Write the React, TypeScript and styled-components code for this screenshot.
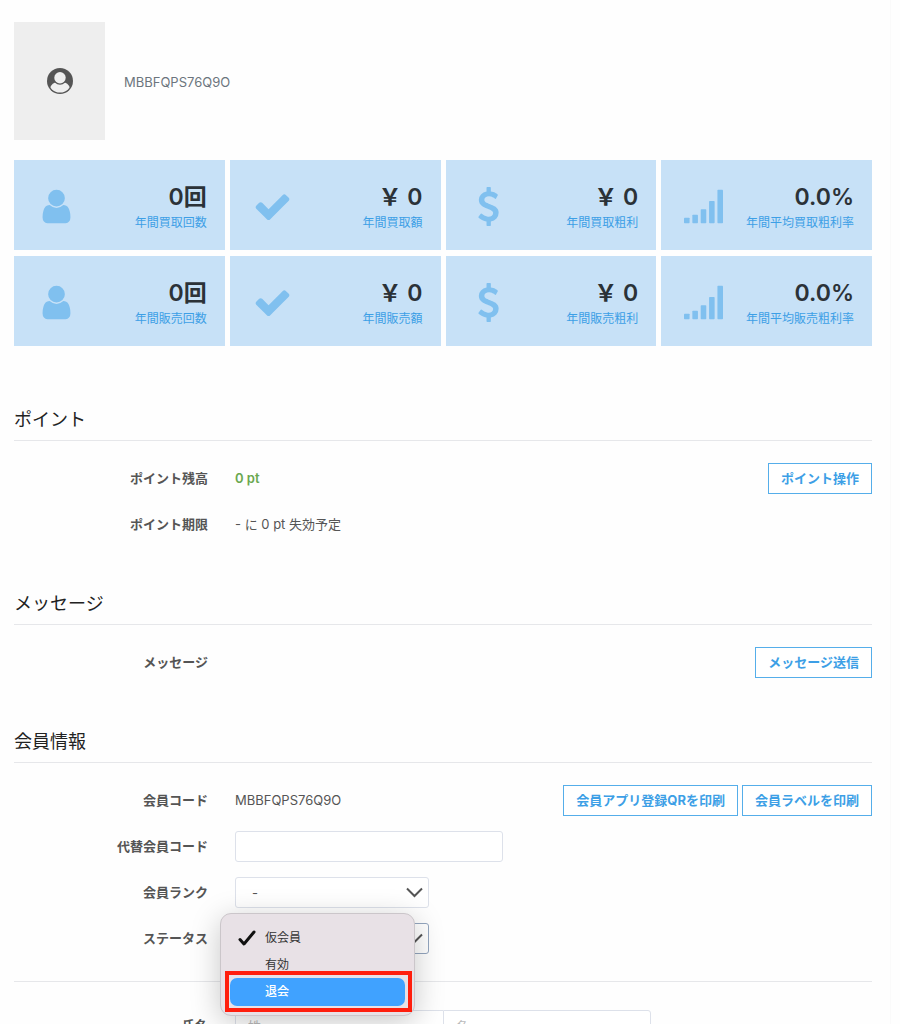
import React from "react";
import styled, { createGlobalStyle, css } from "styled-components";

const GlobalStyle = createGlobalStyle`
  *, *::before, *::after { box-sizing: border-box; }
  body {
    margin: 0;
    background: #fefefe;
    color: #555;
    font-family: Inter, "Noto Sans CJK JP", sans-serif;
    font-size: 13px;
    line-height: 20px;
  }
`;

const Page = styled.main`
  height: 100vh;
  overflow: hidden;
  margin-right: 9px;
  padding: 22px 18px 0 14px;
  border-right: 1px solid #fafafa;
`;

const Profile = styled.header`
  display: flex;
  align-items: center;
  gap: 19px;
  margin-bottom: 20px;
  color: #6c757d;
`;

const MemberCode = styled.span`
  padding-top: 2px;
`;

const Avatar = styled.div`
  display: flex;
  align-items: center;
  justify-content: center;
  width: 91px;
  height: 118px;
  background: #eee;
`;

const StatGrid = styled.section`
  display: grid;
  grid-template-columns: repeat(4, 1fr);
  gap: 6px 5px;
`;

const StatCard = styled.div`
  display: flex;
  align-items: center;
  justify-content: space-between;
  height: 90px;
  padding: 3px 18px 0 23px;
  background: #c7e1f7;
`;

const StatIcon = styled.svg`
  width: 39px;
  height: 39px;
  fill: #80c0ef;
`;

const StatText = styled.div`
  display: flex;
  flex-direction: column;
  gap: 3px;
  padding-top: 2px;
  text-align: right;
`;

const StatValue = styled.strong`
  color: #2b3238;
  font-size: 23px;
  font-weight: 600;
  line-height: 28px;
`;

const StatLabel = styled.span`
  color: #3d9fe6;
  font-size: 12px;
  line-height: 18px;
`;

const Section = styled.section<{ $first?: boolean }>`
  margin-top: ${(p) => (p.$first ? 60 : 50)}px;
`;

const SectionTitle = styled.h2`
  margin: 0 0 22px;
  padding-bottom: 6px;
  border-bottom: 1px solid #e6e7ea;
  color: #222;
  font-size: 18px;
  font-weight: 400;
  line-height: 28px;
`;

const Rows = styled.div`
  display: flex;
  flex-direction: column;
  gap: 15px;
`;

const Row = styled.div`
  display: flex;
  align-items: center;
  gap: 27px;
  min-height: 31px;
`;

const labelStyle = css`
  flex: 0 0 194px;
  padding-bottom: 2px;
  text-align: right;
  font-weight: 700;
`;

const RowTitle = styled.span`
  ${labelStyle}
`;

const RowLabel = styled.label`
  ${labelStyle}
`;

const Value = styled.span`
  flex: 1;
  padding-bottom: 2px;
`;

const Points = styled(Value)`
  color: #6aa84f;
  font-weight: 600;
`;

const Actions = styled.div`
  display: flex;
  gap: 4px;
`;

const OutlineButton = styled.button`
  height: 31px;
  padding: 0 12px 2px;
  border: 1px solid #55aeea;
  background: #fff;
  color: #3d9fe6;
  font: inherit;
  font-weight: 700;
  white-space: nowrap;
`;

const field = css`
  height: 31px;
  border: 1px solid #dde1ea;
  border-radius: 3px;
  background: #fff;
  color: #555;
  font: inherit;
`;

const TextInput = styled.input`
  ${field}
  width: 268px;
  padding: 0 12px;
`;

const NameGroup = styled.div`
  display: flex;
`;

const NameInput = styled.input`
  ${field}
  width: 208px;
  padding: 0 12px;

  &::placeholder { color: #bbb; }
  &:first-child { border-right: 0; border-radius: 3px 0 0 3px; }
  &:last-child { border-radius: 0 3px 3px 0; }
`;

const SelectBox = styled.div`
  position: relative;
  width: 194px;
`;

const Select = styled.select<{ $open?: boolean }>`
  ${field}
  display: block;
  width: 100%;
  padding: 0 30px 0 16px;
  border-color: ${(p) => (p.$open ? "#94a6bf" : "#dde1ea")};
  appearance: none;
`;

const Chevron = styled.svg`
  position: absolute;
  top: 10px;
  right: 6px;
  width: 17px;
  height: 11px;
  fill: none;
  stroke: #555;
  stroke-width: 2;
  pointer-events: none;
`;

const Menu = styled.ul`
  position: absolute;
  z-index: 1;
  top: -10px;
  left: -15px;
  width: 195px;
  height: 103px;
  margin: 0;
  padding: 10px 9px;
  border: 1px solid #cbc6ca;
  border-radius: 11px;
  background: #e8e1e6;
  box-shadow: 0 6px 30px rgba(0, 0, 0, 0.22);
  list-style: none;
`;

const MenuItem = styled.li<{ $active?: boolean }>`
  position: relative;
  display: flex;
  align-items: center;
  gap: 9px;
  height: 27px;
  padding-left: 8px;
  border-radius: 7px;
  color: #333;
  font-size: 12px;

  ${(p) =>
    p.$active &&
    css`
      height: 28px;
      background: #40a2ff;
      color: #fff;
      font-weight: 500;

      &::after {
        content: "";
        position: absolute;
        inset: -7px -7px -6px -5px;
        border: 4px solid #ff1e0d;
      }
    `}
`;

const Tick = styled.svg`
  width: 18px;
  height: 16px;
  fill: none;
  stroke: #111;
  stroke-width: 3;
  stroke-linecap: round;
  stroke-linejoin: round;
`;

const Divider = styled.hr`
  margin: 27px 0 28px;
  border: 0;
  border-top: 1px solid #e6e7ea;
`;

const UserIcon = () => (
  <StatIcon viewBox="0 0 1792 1792" aria-hidden="true">
    <path d="M1536 1399q0 109-62.5 187t-150.5 78h-854q-88 0-150.5-78t-62.5-187q0-85 8.5-160.5t31.5-152 58.5-131 94-89 134.5-34.5q131 128 313 128t313-128q76 0 134.5 34.5t94 89 58.5 131 31.5 152 8.5 160.5zm-256-887q0 159-112.5 271.5t-271.5 112.5-271.5-112.5-112.5-271.5 112.5-271.5 271.5-112.5 271.5 112.5 112.5 271.5z" />
  </StatIcon>
);

const CheckIcon = () => (
  <StatIcon viewBox="0 0 1792 1792" aria-hidden="true">
    <path d="M1671 566q0 40-28 68l-724 724-136 136q-28 28-68 28t-68-28l-136-136-362-362q-28-28-28-68t28-68l136-136q28-28 68-28t68 28l294 295 656-657q28-28 68-28t68 28l136 136q28 28 28 68z" />
  </StatIcon>
);

const DollarIcon = () => (
  <StatIcon viewBox="0 0 1792 1792" aria-hidden="true">
    <path d="M1362 1185q0 153-99.5 263.5t-258.5 136.5v175q0 14-9 23t-23 9h-135q-13 0-22.5-9.5t-9.5-22.5v-175q-66-9-127.5-31t-101.5-44.5-74-48-46.5-37.5-17.5-18q-17-21-2-41l103-135q7-10 23-12 15-2 24 9l2 2q113 99 243 125 37 8 74 8 81 0 142.5-43t61.5-122q0-28-15-53t-33.5-42-58.5-37.5-66-32-80-32.5q-39-16-61.5-25t-61.5-26.5-62.5-31-56.5-35.5-53.5-42.5-43.5-49-35.5-58-21-66.5-8.5-78q0-138 98-242t255-134v-180q0-13 9.5-22.5t22.5-9.5h135q14 0 23 9t9 23v176q57 6 110.5 23t87 33.5 63.5 37.5 39 29 15 14q17 18 5 38l-81 146q-8 15-23 16-14 3-27-7-3-3-14.5-12t-39-26.5-58.5-32-74.5-26-85.5-11.5q-95 0-155 43t-60 111q0 26 8.5 48t29.5 41.5 39.5 33 56 31 60.5 27 70 27.5q53 20 81 31.5t76 35 75.5 42.5 62 50 53 63.5 31.5 76.5 13 94z" />
  </StatIcon>
);

const SignalIcon = () => (
  <StatIcon viewBox="0 0 1792 1792" aria-hidden="true">
    {[256, 384, 640, 1024, 1536].map((h, i) => (
      <rect key={h} x={i * 384} y={1664 - h} width="256" height={h} rx="32" />
    ))}
  </StatIcon>
);

const AvatarIcon = () => (
  <svg width="26" height="26" viewBox="0 0 26 26" aria-hidden="true">
    <clipPath id="avatar-inner">
      <circle cx="13" cy="13" r="11.6" />
    </clipPath>
    <circle cx="13" cy="13" r="13" fill="#555" />
    <g clipPath="url(#avatar-inner)">
      <ellipse cx="13" cy="21.5" rx="10.2" ry="8" fill="#eee" />
    </g>
    <circle cx="13" cy="9.8" r="6.9" fill="#555" />
    <circle cx="13" cy="9.8" r="5.7" fill="#eee" />
  </svg>
);

const SelectArrow = () => (
  <Chevron viewBox="0 0 17 11" aria-hidden="true">
    <path d="M1 1.5L8.5 9L16 1.5" />
  </Chevron>
);

const stats = [
  { Icon: UserIcon, value: "0回", label: "年間買取回数" },
  { Icon: CheckIcon, value: "￥ 0", label: "年間買取額" },
  { Icon: DollarIcon, value: "￥ 0", label: "年間買取粗利" },
  { Icon: SignalIcon, value: "0.0%", label: "年間平均買取粗利率" },
  { Icon: UserIcon, value: "0回", label: "年間販売回数" },
  { Icon: CheckIcon, value: "￥ 0", label: "年間販売額" },
  { Icon: DollarIcon, value: "￥ 0", label: "年間販売粗利" },
  { Icon: SignalIcon, value: "0.0%", label: "年間平均販売粗利率" },
];

export default function App() {
  return (
    <>
      <GlobalStyle />
      <Page lang="ja">
        <Profile>
          <Avatar>
            <AvatarIcon />
          </Avatar>
          <MemberCode>MBBFQPS76Q9O</MemberCode>
        </Profile>

        <StatGrid>
          {stats.map(({ Icon, value, label }) => (
            <StatCard key={label}>
              <Icon />
              <StatText>
                <StatValue>{value}</StatValue>
                <StatLabel>{label}</StatLabel>
              </StatText>
            </StatCard>
          ))}
        </StatGrid>

        <Section $first>
          <SectionTitle>ポイント</SectionTitle>
          <Rows>
            <Row>
              <RowTitle>ポイント残高</RowTitle>
              <Points>0 pt</Points>
              <OutlineButton type="button">ポイント操作</OutlineButton>
            </Row>
            <Row>
              <RowTitle>ポイント期限</RowTitle>
              <Value>- に 0 pt 失効予定</Value>
            </Row>
          </Rows>
        </Section>

        <Section>
          <SectionTitle>メッセージ</SectionTitle>
          <Rows>
            <Row>
              <RowTitle>メッセージ</RowTitle>
              <Value />
              <OutlineButton type="button">メッセージ送信</OutlineButton>
            </Row>
          </Rows>
        </Section>

        <Section>
          <SectionTitle>会員情報</SectionTitle>
          <Rows>
            <Row>
              <RowTitle>会員コード</RowTitle>
              <Value>MBBFQPS76Q9O</Value>
              <Actions>
                <OutlineButton type="button">会員アプリ登録QRを印刷</OutlineButton>
                <OutlineButton type="button">会員ラベルを印刷</OutlineButton>
              </Actions>
            </Row>
            <Row>
              <RowLabel htmlFor="alt-code">代替会員コード</RowLabel>
              <TextInput id="alt-code" type="text" />
            </Row>
            <Row>
              <RowLabel htmlFor="rank">会員ランク</RowLabel>
              <SelectBox>
                <Select id="rank">
                  <option>-</option>
                </Select>
                <SelectArrow />
              </SelectBox>
            </Row>
            <Row>
              <RowLabel htmlFor="status">ステータス</RowLabel>
              <SelectBox>
                <Select id="status" $open defaultValue="仮会員">
                  <option>仮会員</option>
                  <option>有効</option>
                  <option>退会</option>
                </Select>
                <SelectArrow />
                <Menu role="listbox" aria-label="ステータス">
                  <MenuItem role="option" aria-selected="true">
                    <Tick viewBox="0 0 18 16" aria-hidden="true">
                      <path d="M2 9.5L6 14L16 2" />
                    </Tick>
                    仮会員
                  </MenuItem>
                  <MenuItem role="option" aria-selected="false">
                    <Tick as="span" />
                    有効
                  </MenuItem>
                  <MenuItem role="option" aria-selected="false" $active>
                    <Tick as="span" />
                    退会
                  </MenuItem>
                </Menu>
              </SelectBox>
            </Row>
          </Rows>
          <Divider />
          <Row>
            <RowLabel htmlFor="last-name">氏名</RowLabel>
            <NameGroup>
              <NameInput id="last-name" type="text" placeholder="姓" />
              <NameInput type="text" placeholder="名" aria-label="名" />
            </NameGroup>
          </Row>
        </Section>
      </Page>
    </>
  );
}
